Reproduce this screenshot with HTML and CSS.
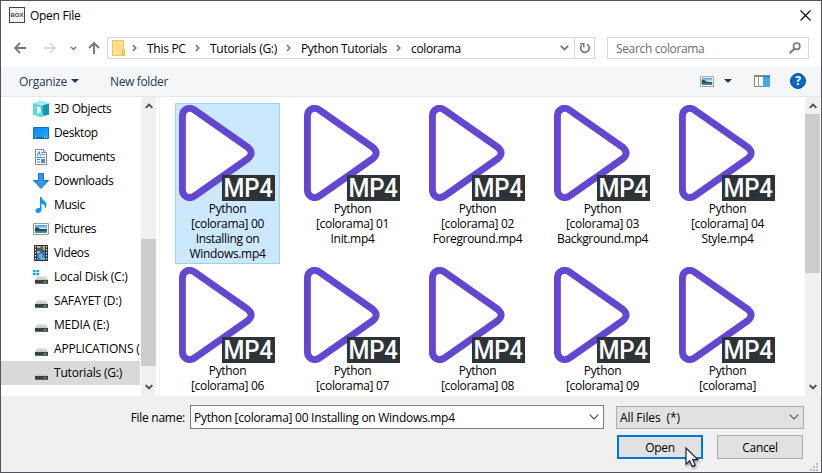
FILE: index.html
```html
<!DOCTYPE html>
<html lang="en">
<head>
<meta charset="utf-8">
<title>Open File</title>
<link rel="stylesheet" href="styles.css">
</head>
<body>
<svg class="defs" width="0" height="0" aria-hidden="true">
  <defs>
    <linearGradient id="screen" x1="0" y1="0" x2="1" y2="1"><stop offset="0" stop-color="#0a8cf0"/><stop offset="1" stop-color="#21aaff"/></linearGradient>
    <linearGradient id="sky" x1="0" y1="0" x2="0" y2="1"><stop offset="0" stop-color="#4a91e0"/><stop offset=".5" stop-color="#d5eef8"/><stop offset=".55" stop-color="#2b5f60"/><stop offset="1" stop-color="#4b9cb6"/></linearGradient>
    <linearGradient id="lid" x1="0" y1="0" x2="0" y2="1"><stop offset="0" stop-color="#e6e6e6"/><stop offset="1" stop-color="#c2c4c6"/></linearGradient>
    <symbol id="drive" viewBox="0 0 16 16"><path d="M4 6h9l2 4H2z" fill="url(#lid)"/><path d="M2 10h13v4H2z" fill="#3b3d40"/><path d="M2 13h13v1H2z" fill="#66686a"/><path d="M11 11h2v1.500h-2z" fill="#23e53b"/></symbol>
    <symbol id="photo" viewBox="0 0 16 12"><path d="M.5.5h15v11H.5z" fill="#fff" stroke="#999"/><path d="M2 2h12v8H2z" fill="url(#sky)"/><path d="M2 4.500q3-1 5 1.500l7 1v1H2z" fill="#20504f"/></symbol>
    <symbol id="up" viewBox="0 0 8 6"><path d="M.7 4.900 4 1.600l3.300 3.300" fill="none" stroke="#505050" stroke-width="2"/></symbol>
    <symbol id="down" viewBox="0 0 8 6"><path d="M.7 1.100 4 4.400l3.300-3.300" fill="none" stroke="#505050" stroke-width="2"/></symbol>
    <symbol id="chev" viewBox="0 0 5 8"><path d="M1 1l2.800 3L1 7" fill="none" stroke="#777" stroke-width="1.600"/></symbol>
    <symbol id="mp4" viewBox="0 0 96 96">
      <path d="M3.400 11.500C3.400 4 10 1.200 16 5.300L68.800 42.300Q75.500 48 68.800 53.700L16 90.700C10 94.800 3.400 92 3.400 84.500Z" fill="#fff" stroke="#6347d1" stroke-width="6.900"/>
      <path d="M43 70h53v26H43z" fill="#2e3337"/>
      <text x="44.500" y="92.300" font-family="Roboto" font-weight="500" font-size="26" fill="#fff" textLength="49" lengthAdjust="spacingAndGlyphs">MP4</text>
    </symbol>
  </defs>
</svg>
<div class="window">
  <header class="title">
    <span class="app">BOX</span><span class="caption">Open File</span>
    <svg class="close" width="11" height="11" viewBox="0 0 11 11"><path d="M.5.5l10 10M10.500.5l-10 10" stroke="#000" stroke-width="1.100"/></svg>
  </header>
  <nav class="nav">
    <div class="arrows">
      <svg width="12" height="12" viewBox="0 0 12 12"><path d="M12 6H1M6 1L1 6l5 5" fill="none" stroke="#777" stroke-width="1.800"/></svg>
      <svg class="fwd" width="12" height="12" viewBox="0 0 12 12"><path d="M0 6h11M6 1l5 5-5 5" fill="none" stroke="#d9d9d9" stroke-width="1.800"/></svg>
      <svg class="recent" width="7" height="5" viewBox="0 0 7 5"><path d="M.8.8l2.700 2.700L6.200.8" fill="none" stroke="#777" stroke-width="1.500"/></svg>
      <svg class="upto" width="12" height="12" viewBox="0 0 12 12"><path d="M6 12V1M1 6l5-5 5 5" fill="none" stroke="#777" stroke-width="1.900"/></svg>
    </div>
    <div class="address">
      <svg class="folder" width="14" height="16" viewBox="0 0 14 16"><path d="M.5.5h11v9.500l1 .5v5H.5z" fill="#ffe08a" stroke="#f0c750"/><path d="M10.500 15.500v-5l2-1v6z" fill="#ffe69c" stroke="#eab932"/></svg>
      <svg class="sep s1"><use href="#chev"/></svg><span class="c1">This PC</span>
      <svg class="sep"><use href="#chev"/></svg><span class="c2">Tutorials (G:)</span>
      <svg class="sep"><use href="#chev"/></svg><span class="c3">Python Tutorials</span>
      <svg class="sep"><use href="#chev"/></svg><span class="c4">colorama</span>
      <svg class="drop" width="9" height="6" viewBox="0 0 9 6"><path d="M.8.8l3.700 3.700L8.200.8" fill="none" stroke="#777" stroke-width="1.900"/></svg>
      <div class="reload"><svg width="11" height="12" viewBox="0 0 11 12"><path d="M8 2.300A4.300 4.300 0 1 1 2.800 3" fill="none" stroke="#777" stroke-width="1.700"/><path d="M1 1.700h3.800v3.800" fill="none" stroke="#777" stroke-width="1.500"/></svg></div>
    </div>
    <div class="search"><span>Search colorama</span><svg width="12" height="12" viewBox="0 0 12 12"><circle cx="7.700" cy="4.200" r="3.200" fill="none" stroke="#777" stroke-width="1.600"/><path d="M5.400 6.600L.7 11.200" stroke="#777" stroke-width="2"/></svg></div>
  </nav>
  <div class="toolbar">
    <span class="organize">Organize</span><i class="tri"></i><span class="newf">New folder</span>
    <svg class="view" width="14" height="11" viewBox="0 0 16 12" preserveAspectRatio="none"><use href="#photo"/></svg><i class="tri tri2"></i>
    <svg class="pane" width="16" height="12" viewBox="0 0 16 12"><path d="M.5.5h15v11H.5z" fill="#fff" stroke="#8a8a8a"/><path d="M0 0h16v2H0z" fill="#8a8a8a"/><path d="M4.500 2v9" stroke="#999"/><path d="M9 1h7v11H9z" fill="#48a6ec"/><path d="M9 1h7v1.500H9z" fill="#2f83c6"/></svg>
    <svg class="help" width="16" height="16" viewBox="0 0 16 16"><circle cx="8" cy="8" r="7.500" fill="#0568c9" stroke="#07529c"/><text x="8" y="12.300" text-anchor="middle" font-family="Open Sans" font-weight="700" font-size="12" fill="#fff">?</text></svg>
  </div>
  <main class="body">
    <aside class="tree">
      <div class="item"><svg viewBox="0 0 16 16"><path d="M0 2.500L8 0l8 2.500v11L8 16l-8-2.500z" fill="#35bfd0"/><path d="M0 2.500L8 0l8 2.500L8 5z" fill="#a0ecf2"/><path d="M0 2.500l4 1.200v11L0 13.500z" fill="#67d5e0"/><path d="M4 5l4 1v6l-4 2z" fill="#e0fafc"/><path d="M10 4.500l6-2v11L10 15z" fill="#1597ad"/><path d="M4 12.500l5-1.500 2 3.500L8 16l-4-1z" fill="#66dce6"/></svg><span>3D Objects</span></div>
      <div class="item"><svg viewBox="0 0 16 16"><path d="M.5 2.500h15v11H.5z" fill="url(#screen)" stroke="#0875bc"/><path d="M1 12.500h14" stroke="#06649e"/><path d="M2 12.500h1M11 12.500h1M13 12.500h1" stroke="#fff"/></svg><span>Desktop</span></div>
      <div class="item"><svg viewBox="0 0 16 16"><path d="M2.500.5h8l3 3v12h-11z" fill="#fff" stroke="#858585"/><path d="M10.500.5v3h3" fill="#eee" stroke="#858585"/><path d="M4 7l2-4.500L7.500 7M8.500 3.500H10M8.500 5.500H12M4 8.500h8M4 10.500h3M4 13h3" fill="none" stroke="#2c8bd0"/><path d="M8 10h4v4H8z" fill="#538bb0"/></svg><span>Documents</span></div>
      <div class="item"><svg viewBox="0 0 16 16"><path d="M5.500.5h5v7h5L8 15.500.5 7.500h5z" fill="#3697e9" stroke="#2474bd"/></svg><span>Downloads</span></div>
      <div class="item"><svg viewBox="0 0 16 16"><path d="M7 0h1.500c.5 3.500 5 4 5 8 0 1.500-.8 3-1.700 3.800.6-3-.8-4.500-3.300-5V13c0 2-1.700 3-3.500 3S2.500 15 2.500 13.500 4 10.500 7 11z" fill="#1296f5"/></svg><span>Music</span></div>
      <div class="item"><svg viewBox="0 0 16 16"><use href="#photo" y="2" width="16" height="12"/></svg><span>Pictures</span></div>
      <div class="item"><svg viewBox="0 0 16 16"><path d="M1 0h14v16H1z" fill="#333"/><path d="M4 1h8v7H4z" fill="#e0b742"/><path d="M4 8h8v7H4z" fill="#347dcb"/><path d="M4 3h3l1-2h2v3l2 2v2H8L6 6H4z" fill="#355ea5"/><path d="M6 9h3v3l3 1v2H8l-2-3z" fill="#64b1ec"/><path d="M2.500 1v15M13.500 1v15" stroke="#ddd" stroke-width="1.200" stroke-dasharray="1.500 1.500"/></svg><span>Videos</span></div>
      <div class="item disk"><svg viewBox="0 0 16 16"><use href="#drive" y="1" width="16" height="16"/><path d="M0 0h7v7H0z" fill="#fff"/><path d="M0 1h2.700v2.200H0zM3.500 1h2.700v2.200H3.500zM0 4h2.700v2.200H0zM3.500 4h2.700v2.200H3.500z" fill="#00adf0"/></svg><span>Local Disk (C:)</span></div>
      <div class="item disk"><svg><use href="#drive" y="1" width="16" height="16"/></svg><span>SAFAYET (D:)</span></div>
      <div class="item disk"><svg><use href="#drive" y="1" width="16" height="16"/></svg><span>MEDIA (E:)</span></div>
      <div class="item disk"><svg><use href="#drive" y="1" width="16" height="16"/></svg><span>APPLICATIONS (</span></div>
      <div class="item disk selected"><svg><use href="#drive" y="1" width="16" height="16"/></svg><span>Tutorials (G:)</span></div>
    </aside>
    <div class="scroll left"><svg><use href="#up"/></svg><i class="thumb"></i><svg><use href="#down"/></svg></div>
    <section class="files">
      <div class="tile on"><svg><use href="#mp4"/></svg><p>Python<br>[colorama] 00<br>Installing on<br>Windows.mp4</p></div>
      <div class="tile"><svg><use href="#mp4"/></svg><p>Python<br>[colorama] 01<br>Init.mp4</p></div>
      <div class="tile"><svg><use href="#mp4"/></svg><p>Python<br>[colorama] 02<br>Foreground.mp4</p></div>
      <div class="tile"><svg><use href="#mp4"/></svg><p>Python<br>[colorama] 03<br>Background.mp4</p></div>
      <div class="tile"><svg><use href="#mp4"/></svg><p>Python<br>[colorama] 04<br>Style.mp4</p></div>
      <div class="tile"><svg><use href="#mp4"/></svg><p>Python<br>[colorama] 06</p></div>
      <div class="tile"><svg><use href="#mp4"/></svg><p>Python<br>[colorama] 07</p></div>
      <div class="tile"><svg><use href="#mp4"/></svg><p>Python<br>[colorama] 08</p></div>
      <div class="tile"><svg><use href="#mp4"/></svg><p>Python<br>[colorama] 09</p></div>
      <div class="tile"><svg><use href="#mp4"/></svg><p>Python<br>[colorama]</p></div>
    </section>
    <div class="scroll right"><svg><use href="#up"/></svg><i class="thumb"></i><svg><use href="#down"/></svg></div>
  </main>
  <footer class="foot">
    <div class="row">
      <label>File name:</label>
      <div class="input"><span>Python [colorama] 00 Installing on Windows.mp4</span><svg width="10" height="6" viewBox="0 0 10 6"><path d="M.7.7L5 5 9.300.7" fill="none" stroke="#444" stroke-width="1.100"/></svg></div>
      <div class="filter"><span>All Files&nbsp; (*)</span><svg width="10" height="6" viewBox="0 0 10 6"><path d="M.7.7L5 5 9.300.7" fill="none" stroke="#555" stroke-width="1.100"/></svg></div>
    </div>
    <div class="row buttons"><div class="btn primary">Open</div><div class="btn">Cancel</div></div>
    <svg class="grip" width="8" height="8" viewBox="0 0 8 8"><path d="M6 0h2v2H6zM3 3h2v2H3zM6 3h2v2H6zM0 6h2v2H0zM3 6h2v2H3zM6 6h2v2H6z" fill="#bdbdbd"/></svg>
    <svg class="cursor" width="15" height="22" viewBox="0 0 15 22"><path d="M1 1v16.200l3.700-3.500 2.600 5.700 2.900-1.300-2.500-5.500h5z" fill="#fff" stroke="#1c2233" stroke-width="1.200"/></svg>
  </footer>
</div>
</body>
</html>
```
FILE: styles.css
```css
* { box-sizing: border-box; }
body { margin: 0; font: 12px/15px "Open Sans", "Noto Sans", sans-serif; letter-spacing: -.28px; color: #000; overflow: hidden; }
svg { display: block; flex: none; }
.defs { position: absolute; }
.window { width: 822px; height: 473px; border: 1px solid #555359; background: #fff; display: flex; flex-direction: column; white-space: nowrap; }
.title { height: 30px; flex: none; display: flex; align-items: center; padding: 0 10px 2px 8px; }
.app { width: 16px; height: 16px; border: 1px solid #444; background: #f3f3f3; color: #444; font: 700 6px/14px "Liberation Sans", sans-serif; letter-spacing: 0; text-align: center; }
.caption { margin-left: 5px; padding-top: 1px; }
.close { margin-left: auto; }
.nav { height: 35px; flex: none; display: flex; padding-top: 6px; align-items: flex-start; }
.arrows { display: flex; width: 106px; height: 22px; align-items: center; padding-left: 13px; }
.fwd { margin-left: 18px; }
.recent { margin-left: 14px; }
.upto { margin-left: 11px; }
.address { width: 488px; height: 22px; border: 1px solid #d9d9d9; display: flex; align-items: center; padding-left: 4px; }
.address span { margin-right: 8px; }
.sep { width: 5px; height: 8px; margin-right: 10px; }
.s1 { margin-left: 6px; }
.c1 { width: 40px; }
.c2 { width: 68px; }
.c3 { width: 87px; }
.c4 { width: 51px; }
.c3, .c4 { letter-spacing: -.35px; }
.drop { margin-left: auto; margin-right: 5px; }
.reload { width: 20px; height: 20px; border-left: 1px solid #d9d9d9; display: flex; align-items: center; justify-content: center; }
.search { width: 202px; height: 22px; margin-left: 12px; border: 1px solid #d9d9d9; padding: 0 7px 0 8px; display: flex; align-items: center; justify-content: space-between; color: #6d6d6d; letter-spacing: -.35px; }
.toolbar { height: 31px; flex: none; background: #f5f6f7; border-bottom: 1px solid #e8e8e8; display: flex; align-items: center; padding: 0 15px 0 18px; color: #1e395b; }
.organize { width: 48px; }
.tri { border: 4px solid transparent; border-top-color: #1e395b; border-bottom: 0; margin-left: 4px; }
.newf { margin-left: 31px; letter-spacing: -.35px; }
.view { margin-left: auto; }
.tri2 { margin-left: 10px; }
.pane { margin-left: 22px; }
.help { margin-left: 20px; }
.body { height: 299px; flex: none; display: flex; overflow: hidden; }
.tree { width: 139px; overflow: hidden; }
.item { height: 24px; padding-left: 32px; display: flex; align-items: center; gap: 5px; letter-spacing: -.35px; }
.item span { padding-bottom: 2px; }
.item svg { width: 16px; height: 16px; }
.disk { letter-spacing: -.2px; }
.selected { background: #d9d9d9; }
.scroll { width: 15px; background: #f0f0f0; display: flex; flex-direction: column; align-items: center; padding: 6px 0; }
.scroll svg { width: 8px; height: 6px; }
.scroll svg:last-child { margin-top: auto; }
.thumb { width: 100%; background: #cdcdcd; }
.left { margin-left: 1px; }
.left .thumb { height: 127px; margin-top: 130px; }
.right .thumb { height: 159px; margin-top: 5px; }
.files { width: 646px; border-left: 1px solid #f2f2f2; margin-left: 3px; padding: 6px 0 0 15px; display: grid; grid-template-columns: repeat(5, 105px); grid-auto-rows: 161px; gap: 1px 20px; }
.tile { border: 1px solid transparent; padding-top: 1px; text-align: center; letter-spacing: -.33px; }
.tile svg { width: 96px; height: 96px; margin-left: 3px; }
.tile p { margin: 0; }
.on { background: #cce8ff; border-color: #99d1ff; }
.foot { height: 76px; flex: none; background: #f0f0f0; padding-top: 9px; position: relative; }
.row { display: flex; align-items: center; }
.row label { width: 189px; padding-right: 5px; text-align: right; }
.input { width: 414px; height: 24px; border: 1px solid #7a7a7a; background: #fff; padding: 0 4px 0 3px; display: flex; align-items: center; justify-content: space-between; }
.filter { width: 188px; height: 23px; margin-left: 12px; border: 1px solid #adadad; background: #e1e1e1; padding: 0 4px 0 3px; display: flex; align-items: center; justify-content: space-between; letter-spacing: -.1px; }
.buttons { gap: 14px; padding-left: 616px; margin-top: 6px; }
.btn { width: 86px; height: 24px; border: 1px solid #adadad; background: #e1e1e1; display: flex; align-items: center; justify-content: center; }
.primary { border: 2px solid #0078d7; }
.grip { position: absolute; right: 3px; bottom: 1px; }
.cursor { position: absolute; left: 684px; top: 51px; filter: drop-shadow(1px 2px 1px rgba(0, 0, 0, .35)); }
```
